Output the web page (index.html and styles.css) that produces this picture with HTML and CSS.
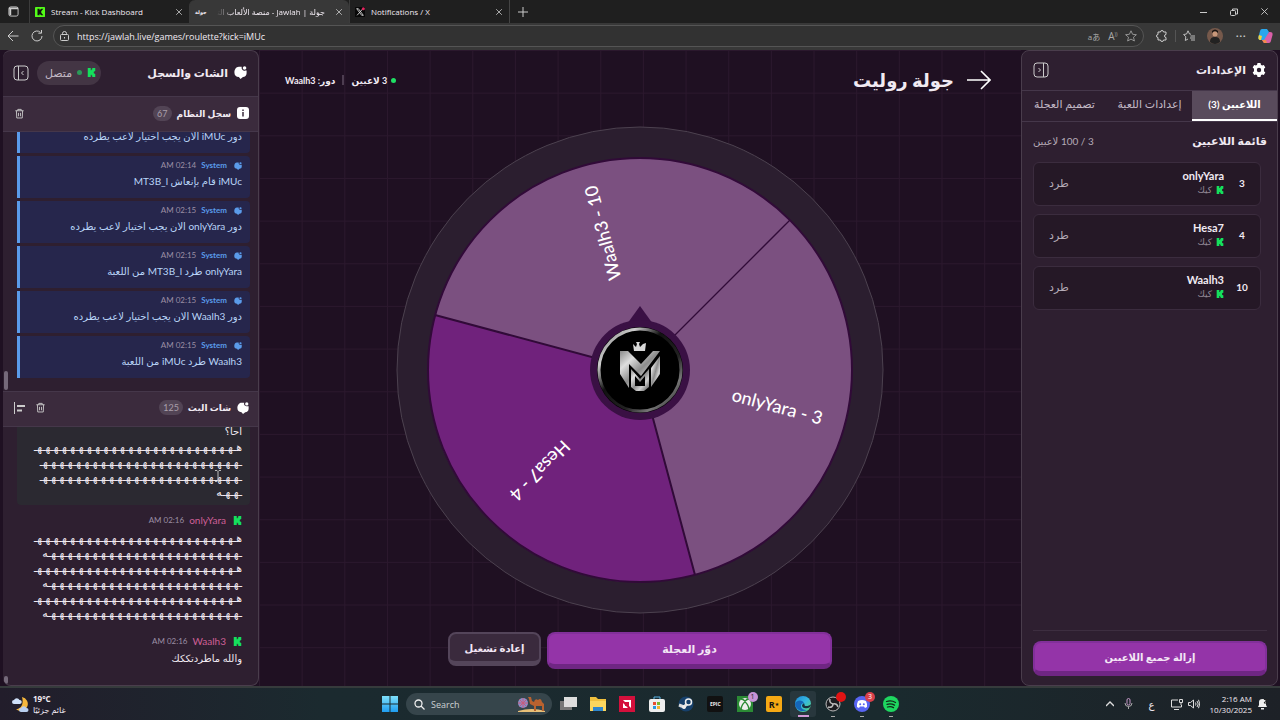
FILE: index.html
```
<!DOCTYPE html>
<html lang="ar">
<head>
  <meta charset="UTF-8">
  <meta name="viewport" content="width=device-width, initial-scale=1.0">
  <title>جولة | Jawlah - منصة الألعاب التفاعلية</title>
  <link rel="stylesheet" href="styles.css">
</head>
<body>

  <!-- Shared icons -->
  <svg class="defs" width="0" height="0" aria-hidden="true">
    <defs>
      <linearGradient id="metal" x1="0" y1="0" x2="1" y2="1">
        <stop offset="0" stop-color="#8a8a8a"/><stop offset=".25" stop-color="#dedede"/><stop offset=".5" stop-color="#8c8c8c"/><stop offset=".7" stop-color="#cfcfcf"/><stop offset="1" stop-color="#4a4a4a"/>
      </linearGradient>
      <linearGradient id="rim" x1="0" y1="0" x2="1" y2="1">
        <stop offset="0" stop-color="#777"/><stop offset=".22" stop-color="#ccc"/><stop offset=".4" stop-color="#111"/><stop offset=".65" stop-color="#222"/><stop offset=".8" stop-color="#777"/><stop offset="1" stop-color="#111"/>
      </linearGradient>
      <linearGradient id="edgeA" x1="0" y1="0" x2="1" y2="1">
        <stop offset="0" stop-color="#1b86d8"/><stop offset=".5" stop-color="#36b9e0"/><stop offset="1" stop-color="#5cd66b"/>
      </linearGradient>
      <linearGradient id="win" x1="0" y1="0" x2="0" y2="1">
        <stop offset="0" stop-color="#7fe0fb"/><stop offset="1" stop-color="#1f9df0"/>
      </linearGradient>
    </defs>
    <symbol id="kick" viewBox="0 0 12 12"><path d="M1 0h4v3h1V2h1V0h4v4h-1v1H9v2h1v1h1v4H7v-2H6V9H5v3H1z"/></symbol>
    <symbol id="chat" viewBox="0 0 16 16"><path d="M6 1h3.500a3.500 3.500 0 0 0 4.500 4.500h1.500V9c0 3-2 4.500-4.500 4.500L8 16l-2-2.500C2.500 13.500.500 11.500.500 8S2.500 1 6 1z"/><circle cx="13" cy="2.500" r="2.200"/></symbol>
    <symbol id="trash" viewBox="0 0 16 16"><path d="M2 4h12M5.500 4V2h5v2M3.500 4l.5 10.500h8L12.500 4M6.500 7v5M9.500 7v5" fill="none" stroke="currentColor" stroke-width="1.300"/></symbol>
    <symbol id="close" viewBox="0 0 10 10"><path d="M1.500 1.500l7 7M8.500 1.500l-7 7" fill="none" stroke="currentColor"/></symbol>
  </svg>

  <!-- Browser -->
  <div class="tabbar">
    <button class="icon-btn" aria-label="Tab actions"><svg viewBox="0 0 12 12" width="11" height="11"><rect x="1" y="1" width="10" height="10" rx="2" fill="none" stroke="#ccc"/><path d="M1 2.500h10M2.500 3v7" stroke="#ccc" stroke-width="2"/></svg></button>
    <div class="tab">
      <svg class="favicon" viewBox="0 0 12 12"><rect width="12" height="12" rx="1" fill="#53fc18"/><path d="M3 2h2.500v2l2-2H10L7.500 5v2L10 10H7.500l-2-2v2H3z" fill="#111"/></svg>
      <span class="tab-title">Stream - Kick Dashboard</span>
      <button class="icon-btn" aria-label="Close tab"><svg width="8" height="8"><use href="#close"/></svg></button>
    </div>
    <div class="tab current">
      <span class="jawlah-icon">جولة</span>
      <span class="tab-title faded" dir="rtl">جولة | Jawlah - منصة الألعاب التفاعلية</span>
      <button class="icon-btn" aria-label="Close tab"><svg width="8" height="8"><use href="#close"/></svg></button>
    </div>
    <div class="tab">
      <svg class="favicon" viewBox="0 0 12 12"><rect width="12" height="12" rx="1" fill="#080808"/><path d="M2 2h2l6 8H8zM9.500 2L2.500 10" fill="none" stroke="#ddd"/><circle cx="10" cy="2" r="1.800" fill="#e0245e"/></svg>
      <span class="tab-title">Notifications / X</span>
      <button class="icon-btn" aria-label="Close tab"><svg width="8" height="8"><use href="#close"/></svg></button>
    </div>
    <button class="icon-btn new-tab" aria-label="New tab"><svg width="10" height="10" viewBox="0 0 10 10"><path d="M5 0v10M0 5h10" stroke="#ccc"/></svg></button>
    <div class="window-controls">
      <button class="icon-btn" aria-label="Minimize"><svg width="8" height="8" viewBox="0 0 8 8"><path d="M0 4.500h7" stroke="#ccc"/></svg></button>
      <button class="icon-btn" aria-label="Restore"><svg width="8" height="8" viewBox="0 0 8 8"><rect x=".5" y="2.500" width="5" height="5" rx="1" fill="none" stroke="#ccc"/><path d="M2.500 2V1h5v5H6" fill="none" stroke="#ccc"/></svg></button>
      <button class="icon-btn" aria-label="Close"><svg width="9" height="9"><use href="#close"/></svg></button>
    </div>
  </div>

  <div class="toolbar">
    <button class="icon-btn" aria-label="Back"><svg width="12" height="12" viewBox="0 0 12 12"><path d="M11.500 6H1M6 1L1 6l5 5" fill="none" stroke="#ccc"/></svg></button>
    <button class="icon-btn" aria-label="Reload"><svg width="12" height="12" viewBox="0 0 12 12"><path d="M11 6a5 5 0 1 1-1.500-3.600M10.500 0v3.200H7.300" fill="none" stroke="#ccc"/></svg></button>
    <div class="address">
      <svg width="9" height="10" viewBox="0 0 9 10"><rect x=".5" y="3.500" width="8" height="6" rx="1" fill="none" stroke="#ccc"/><path d="M2.500 3.500V2.500a2 2 0 0 1 4 0v1M4.500 6v1.500" fill="none" stroke="#ccc"/></svg>
      <input type="text" value="https://jawlah.live/games/roulette?kick=iMUc" aria-label="Address">
      <span class="address-tool">aあ</span>
      <span class="address-tool big">A<sup>))</sup></span>
      <svg width="12" height="12" viewBox="0 0 12 12"><path d="M6 .8l1.600 3.500 3.800.4-2.900 2.500.9 3.800L6 9.100 2.600 11l.9-3.800L.6 4.700l3.800-.4z" fill="none" stroke="#aaa" stroke-width=".8"/></svg>
    </div>
    <button class="icon-btn" aria-label="Extensions"><svg width="12" height="12" viewBox="0 0 12 12"><path d="M2 2h2.500a1.500 1.500 0 0 1 3 0H10v2.500a1.500 1.500 0 0 0 0 3V10H7.500a1.500 1.500 0 0 1-3 0H2V7.500a1.500 1.500 0 0 1 0-3z" fill="none" stroke="#ccc"/></svg></button>
    <span class="divider"></span>
    <button class="icon-btn" aria-label="Favorites"><svg width="12" height="12" viewBox="0 0 12 12"><path d="M8 4.200L6.500 4 5 .8 3.600 4 .6 4.500l2.200 2.300L2.300 10.500 5 9M7.500 6H12M7 8h5M8 10h4" fill="none" stroke="#ccc" stroke-width=".9"/></svg></button>
    <button class="icon-btn" aria-label="Profile"><svg width="16" height="16" viewBox="0 0 16 16"><circle cx="8" cy="8" r="8" fill="#76594b"/><path d="M3 14c0-4 2-5 5-5s5 1 5 5a8 8 0 0 1-10 0z" fill="#222"/><circle cx="8" cy="6" r="2.500" fill="#c9987a"/><path d="M5 5q3-4 6 0V3Q8 0 5 3z" fill="#1a1512"/></svg></button>
    <button class="icon-btn" aria-label="More">···</button>
    <button class="icon-btn" aria-label="Copilot"><svg width="15" height="14" viewBox="0 0 15 14"><path d="M4 0h5l2 3-3 8H3C0 11 0 9 1 6s1-6 3-6z" fill="#2aa6ec"/><path d="M1 6l3 1-1 4C0 11 0 9 1 6z" fill="#f0cf3c"/><path d="M11 3h1c3 0 3 2 2 5s-1 6-3 6H6l-2-3h2z" fill="#d95fa8"/><path d="M4 11h4l1 3H6z" fill="#f28a4e"/></svg></button>
  </div>

  <!-- Game page -->
  <main class="app" dir="rtl">

    <aside class="panel settings">
      <div class="settings-header">
        <h2><svg width="14" height="14" viewBox="0 0 16 16"><path fill="#fff" fill-rule="evenodd" d="M6.300 0h3.400l.5 2 1.300.8 2-.6 1.700 2.900L13.700 6.500v3l1.500 1.400-1.700 2.900-2-.6-1.300.8-.5 2H6.300l-.5-2-1.300-.8-2 .6L.8 10.900 2.300 9.500v-3L.8 5.100l1.700-2.900 2 .6L5.800 2zM8 5.500a2.500 2.500 0 1 0 0 5 2.500 2.500 0 0 0 0-5z"/></svg>الإعدادات</h2>
        <button class="icon-btn" aria-label="إغلاق الإعدادات"><svg width="16" height="16" viewBox="0 0 16 16"><rect x="1" y="1" width="14" height="14" rx="3" fill="none" stroke="#ccc"/><path d="M10.500 1v14M5.500 6l2 2-2 2" fill="none" stroke="#ccc"/></svg></button>
      </div>
      <nav class="settings-tabs">
        <button class="active">اللاعبين (3)</button>
        <button>إعدادات اللعبة</button>
        <button>تصميم العجلة</button>
      </nav>
      <section class="players">
        <div class="players-title">
          <h3>قائمة اللاعبين</h3>
          <span>3 / 100 لاعبين</span>
        </div>
        <ul>
          <li>
            <b class="number">3</b>
            <div class="player"><strong>onlyYara</strong><small><svg class="kick" width="8" height="8"><use href="#kick"/></svg>كيك</small></div>
            <button class="kick-out">طرد</button>
          </li>
          <li>
            <b class="number">4</b>
            <div class="player"><strong>Hesa7</strong><small><svg class="kick" width="8" height="8"><use href="#kick"/></svg>كيك</small></div>
            <button class="kick-out">طرد</button>
          </li>
          <li>
            <b class="number">10</b>
            <div class="player"><strong>Waalh3</strong><small><svg class="kick" width="8" height="8"><use href="#kick"/></svg>كيك</small></div>
            <button class="kick-out">طرد</button>
          </li>
        </ul>
      </section>
      <div class="settings-footer">
        <button class="btn primary">إزالة جميع اللاعبين</button>
      </div>
    </aside>

    <section class="game">
      <div class="game-header">
        <h1><svg width="24" height="20" viewBox="0 0 24 20"><path d="M0 10h23M14 1l9 9-9 9" fill="none" stroke="#fff" stroke-width="1.600"/></svg>جولة روليت</h1>
        <p class="status"><i class="dot"></i><span>3 لاعبين</span><i class="bar"></i><span>دور: Waalh3</span></p>
      </div>

      <svg class="wheel" viewBox="-246 -246 492 492" direction="ltr">
        <circle r="243" fill="#2b1e2f" stroke="#4c414f"/>
        <circle r="212" fill="#7b5080"/>
        <path d="M0 0L-205-55A212 212 0 0 0 55 205z" fill="#70227c"/>
        <path d="M0 0L-205-55M0 0L55 205" stroke="#310a38" stroke-width="2"/>
        <path d="M0 0L150-150" stroke="#310a38" stroke-width="1.300"/>
        <circle r="212" fill="none" stroke="#310a38" stroke-width="2"/>
        <g class="slice-label">
          <text transform="rotate(15) translate(142 6)">onlyYara - 3</text>
          <text transform="rotate(135) translate(142 6)">Hesa7 - 4</text>
          <text transform="rotate(255) translate(142 6)">Waalh3 - 10</text>
        </g>
        <path d="M0-64L13-46H-13z" fill="#3a1044"/>
        <circle r="50" fill="#3a1044"/>
        <circle r="43" fill="#000"/>
        <circle r="41" fill="none" stroke="url(#rim)" stroke-width="3"/>
        <path d="M-6-19l-1-7 3 3 1-3-1-2h4l-1 2 1 3 3-3 3-1-1 8z" fill="#d8d8d8"/>
        <path d="M-20-19h8L1-6 13-19h7L1 6-11-6v24L-20 4z" fill="url(#metal)"/>
        <path d="M20-14v18l-9 13V-2z" fill="url(#metal)"/>
        <path d="M-9-1L0 9 9-1v18l-5 4h-8l-5-4z" fill="url(#metal)"/>
        <path d="M-5 6v10H5V6L0 12z" fill="#000"/>
      </svg>

      <div class="controls">
        <button class="btn primary spin">دوّر العجلة</button>
        <button class="btn secondary">إعادة تشغيل</button>
      </div>
    </section>

    <aside class="panel chat">
      <div class="chat-header">
        <h2><svg width="13" height="13" fill="#fff"><use href="#chat"/></svg>الشات والسجل</h2>
        <div class="header-tools">
          <span class="online"><svg class="kick" width="9" height="9"><use href="#kick"/></svg><i class="dot"></i>متصل</span>
          <button class="icon-btn" aria-label="إغلاق الشات"><svg width="16" height="16" viewBox="0 0 16 16"><rect x="1" y="1" width="14" height="14" rx="3" fill="none" stroke="#ccc"/><path d="M5.500 1v14M10.500 6l-2 2 2 2" fill="none" stroke="#ccc"/></svg></button>
        </div>
      </div>

      <div class="section-bar">
        <h3><svg width="12" height="12" viewBox="0 0 12 12"><rect width="12" height="12" rx="3" fill="#fff"/><path d="M6 5v4.500M6 2.500V4" stroke="#3b2b3d" stroke-width="1.500"/></svg>سجل النظام</h3>
        <span class="count">67</span>
        <div class="bar-tools"><button class="icon-btn" aria-label="مسح السجل"><svg width="11" height="11"><use href="#trash"/></svg></button></div>
      </div>
      <div class="messages log">
        <article class="system">
          <header><svg width="8" height="8"><use href="#chat"/></svg><b>System</b><time>02:14 AM</time></header>
          <p>دور iMUc الان يجب اختيار لاعب يطرده</p>
        </article>
        <article class="system">
          <header><svg width="8" height="8"><use href="#chat"/></svg><b>System</b><time>02:14 AM</time></header>
          <p>iMUc قام بإنعاش MT3B_l</p>
        </article>
        <article class="system">
          <header><svg width="8" height="8"><use href="#chat"/></svg><b>System</b><time>02:15 AM</time></header>
          <p>دور onlyYara الان يجب اختيار لاعب يطرده</p>
        </article>
        <article class="system">
          <header><svg width="8" height="8"><use href="#chat"/></svg><b>System</b><time>02:15 AM</time></header>
          <p>onlyYara طرد MT3B_l من اللعبة</p>
        </article>
        <article class="system">
          <header><svg width="8" height="8"><use href="#chat"/></svg><b>System</b><time>02:15 AM</time></header>
          <p>دور Waalh3 الان يجب اختيار لاعب يطرده</p>
        </article>
        <article class="system">
          <header><svg width="8" height="8"><use href="#chat"/></svg><b>System</b><time>02:15 AM</time></header>
          <p>Waalh3 طرد iMUc من اللعبة</p>
        </article>
      </div>

      <div class="section-bar">
        <h3><svg width="12" height="12" fill="#fff"><use href="#chat"/></svg>شات البث</h3>
        <span class="count">125</span>
        <div class="bar-tools">
          <button class="icon-btn" aria-label="مسح الشات"><svg width="11" height="11"><use href="#trash"/></svg></button>
          <button class="icon-btn" aria-label="محاذاة"><svg width="11" height="12" viewBox="0 0 11 12"><path d="M.5 0v12" stroke="#ccc"/><path d="M3 4h8M3 8.500h5" stroke="#ccc" stroke-width="2"/></svg></button>
        </div>
      </div>
      <div class="messages stream">
        <article class="hovered">
          <p>احا؟</p>
          <p class="laugh">هـهـهـهـهـهـهـهـهـهـهـهـهـهـهـهـهـهـهـهـهـهـهـهـهـ<br>ـهـهـهـهـهـهـهـهـهـهـهـهـهـهـهـهـهـهـهـهـهـهـهـهـ<br>ـهـهـهـهـهـهـهـهـهـهـهـهـهـهـهـهـهـهـهـهـهـهـهـهـ<br>ـهـهـه</p>
          <svg class="cursor" width="6" height="12" viewBox="0 0 6 12"><path d="M0 .5h2l1 1 1-1h2M3 1.500v9M0 11.500h2l1-1 1 1h2" fill="none" stroke="#bbb"/></svg>
        </article>
        <article>
          <header><svg class="kick" width="9" height="9"><use href="#kick"/></svg><b>onlyYara</b><time>02:16 AM</time></header>
          <p class="laugh">هـهـهـهـهـهـهـهـهـهـهـهـهـهـهـهـهـهـهـهـهـهـهـهـهـ<br>ـهـهـهـهـهـهـهـهـهـهـهـهـهـهـهـهـهـهـهـهـهـهـهـه<br>هـهـهـهـهـهـهـهـهـهـهـهـهـهـهـهـهـهـهـهـهـهـهـهـهـ<br>ـهـهـهـهـهـهـهـهـهـهـهـهـهـهـهـهـهـهـهـهـهـهـهـه<br>هـهـهـهـهـهـهـهـهـهـهـهـهـهـهـهـهـهـهـهـهـهـهـهـهـ<br>ـهـهـهـهـهـهـهـهـهـهـهـهـهـهـهـهـهـهـهـهـهـهـهـه</p>
        </article>
        <article>
          <header><svg class="kick" width="9" height="9"><use href="#kick"/></svg><b>Waalh3</b><time>02:16 AM</time></header>
          <p>والله ماطردتككك</p>
        </article>
      </div>
    </aside>
  </main>

  <!-- Windows taskbar -->
  <footer class="taskbar">
    <div class="weather">
      <svg width="17" height="17" viewBox="0 0 17 17"><path d="M10 1a7 7 0 1 1-6 12c5 0 8-5 6-12z" fill="#f6b73c"/><path d="M2 8a2 2 0 0 1 0-4 3 3 0 0 1 5.500 0A2 2 0 0 1 8 8z" fill="#cfe0f8"/><path d="M9 16a2 2 0 0 1 0-4 3 3 0 0 1 5.500 0 2 2 0 0 1 0 4z" fill="#b9cff0"/></svg>
      <p><b>19°C</b><br>غائم جزئيًا</p>
    </div>
    <div class="task-center">
      <button class="icon-btn" aria-label="Start"><svg width="16" height="16" viewBox="0 0 16 16" fill="url(#win)"><path d="M0 0h7.500v7.500H0zM8.500 0H16v7.500H8.500zM0 8.500h7.500V16H0zM8.500 8.500H16V16H8.500z"/></svg></button>
      <label class="search">
        <svg width="11" height="11" viewBox="0 0 11 11"><circle cx="4.500" cy="4.500" r="3.500" fill="none" stroke="#eee" stroke-width="1.300"/><path d="M7 7l3.500 3.500" stroke="#eee" stroke-width="1.300"/></svg>
        <input type="text" placeholder="Search" aria-label="Search">
        <svg width="28" height="18" viewBox="0 0 28 18"><circle cx="5" cy="8" r="5" fill="#8d8fc9"/><path d="M0 8h10M5 3v10M1.500 4.500l7 7M8.500 4.500l-7 7" stroke="#c95a7a"/><path d="M0 16q14-4 27 0v1H0z" fill="#e8c078"/><path d="M10 2h3l1 4 2 1q1-4 4-2 3-3 4 2l2 2v7h-2v-5h-6v5h-2v-5l-4-2-1-5z" fill="#b9622f"/></svg>
      </label>
      <div class="apps">
        <button class="icon-btn" aria-label="Task view"><svg width="18" height="16" viewBox="0 0 18 16"><path d="M0 5h12v9H0z" fill="#777"/><path d="M4 1h13v10H4z" fill="#ddd"/></svg></button>
        <button class="icon-btn" aria-label="Explorer"><svg width="18" height="16" viewBox="0 0 18 16"><path d="M1 1h6l2 2h8v12H1z" fill="#f0c03e"/><path d="M1 5h16v10H1z" fill="#fbd65e"/><path d="M4 11h10v4H4z" fill="#2f86cc"/></svg></button>
        <button class="icon-btn" aria-label="AMD"><svg width="16" height="16" viewBox="0 0 16 16"><path d="M0 0h16v16H0z" fill="#d4103c"/><path d="M4 4h8v8l-2-2V6H6zM4 7v5h5L7 10H6V9z" fill="#fff"/></svg></button>
        <button class="icon-btn" aria-label="Store"><svg width="16" height="16" viewBox="0 0 16 16"><path d="M5 4V1h6v3" fill="none" stroke="#58b3e6"/><rect y="3" width="16" height="13" rx="2" fill="#eee"/><path d="M4 6h3v3H4z" fill="#e84c30"/><path d="M8 6h3v3H8z" fill="#79b82e"/><path d="M4 10h3v3H4z" fill="#2997e0"/><path d="M8 10h3v3H8z" fill="#f3b52d"/></svg></button>
        <button class="icon-btn" aria-label="Steam"><svg width="16" height="16" viewBox="0 0 16 16"><circle cx="8" cy="8" r="7.500" fill="#17406b"/><path d="M1 9l5 2 3-3" stroke="#ddd" stroke-width="3" fill="none"/><circle cx="10.500" cy="6" r="3" fill="#17406b" stroke="#eee" stroke-width="1.500"/><circle cx="6" cy="11" r="2" fill="#eee"/></svg></button>
        <button class="icon-btn epic" aria-label="Epic Games">EPIC</button>
        <button class="icon-btn" aria-label="Xbox"><svg width="16" height="16" viewBox="0 0 16 16"><path d="M0 0h16v16H0z" fill="#2b8a35"/><circle cx="8" cy="8" r="6" fill="#eee"/><path d="M4 13Q5 8 8 6q3 2 4 7M4 3q2 0 4 2 2-2 4-2" fill="none" stroke="#2b8a35" stroke-width="1.500"/></svg><span class="badge lilac">1</span></button>
        <button class="icon-btn rockstar" aria-label="Rockstar">R<sub>★</sub></button>
        <button class="icon-btn open edge" aria-label="Edge"><svg width="16" height="16" viewBox="0 0 16 16"><circle cx="8" cy="8" r="8" fill="url(#edgeA)"/><path d="M0 8c1-4 7-5 9-1 0 0-3 0-3 3s3 4 6 4a8 8 0 0 1-12-6z" fill="#1566b8"/><path d="M9 7c1 2 0 3 2 3s4-.5 5-2q0 3-3 4-6 1-6-3z" fill="#17303f"/></svg></button>
        <button class="icon-btn open" aria-label="OBS"><svg width="16" height="16" viewBox="0 0 16 16"><circle cx="8" cy="8" r="7" fill="#1c1c20" stroke="#bbb"/><path d="M8 8q-4-1-3-5M8 8q4-1 5 3M8 8q0 4-5 3" fill="none" stroke="#bbb" stroke-width="1.500"/></svg><span class="badge red"></span></button>
        <button class="icon-btn open" aria-label="Discord"><svg width="16" height="16" viewBox="0 0 16 16"><circle cx="8" cy="8" r="8" fill="#5865f2"/><path d="M4 5q4-2 8 0 1.500 3 1 6l-2 1-1-1.500H6L5 12l-2-1q-.500-3 1-6z" fill="#fff"/><circle cx="6.200" cy="8.200" r="1" fill="#5865f2"/><circle cx="9.800" cy="8.200" r="1" fill="#5865f2"/></svg><span class="badge coral">3</span></button>
        <button class="icon-btn open" aria-label="Spotify"><svg width="16" height="16" viewBox="0 0 16 16"><circle cx="8" cy="8" r="8" fill="#1ed760"/><path d="M3.500 5.500q5-1.500 9 1M4 8.300q4-1.200 7.500.8M4.500 11q3.500-1 6 .6" fill="none" stroke="#102a18" stroke-width="1.300" stroke-linecap="round"/></svg></button>
      </div>
    </div>
    <div class="tray">
      <svg width="8" height="6" viewBox="0 0 8 6"><path d="M0 5l4-4 4 4" fill="none" stroke="#ddd" stroke-width="1.300"/></svg>
      <svg width="9" height="12" viewBox="0 0 9 12"><rect x="3" y=".5" width="3" height="6.500" rx="1.500" fill="none" stroke="#c69ac9"/><path d="M1 5a3.500 3.500 0 0 0 7 0M4.500 8.500V11" fill="none" stroke="#aaa"/></svg>
      <span class="lang">ع</span>
      <span class="net"><svg width="12" height="11" viewBox="0 0 12 11"><path d="M7 1H.5v7h10V6M3 10.500h5M8.500.5h3v3h-3zM10 4v2" fill="none" stroke="#ddd"/></svg><svg width="12" height="10" viewBox="0 0 12 10"><path d="M.5 3.500h2L5.500 1v8L2.500 6.500h-2zM7.500 3.500q1 1.500 0 3M9 2q2.500 3 0 6M10.500.8q2.500 4 0 8.400" fill="none" stroke="#ddd"/></svg></span>
      <p class="clock">2:16 AM<br>10/30/2025</p>
      <svg width="11" height="12" viewBox="0 0 11 12"><path d="M1 9l1-2V4q0-3 3.500-3T9 4v3l1 2zM4 10h3v1.500H4z" fill="#eee"/><path d="M7 1.500h3L7 5h3" fill="none" stroke="#222"/></svg>
    </div>
  </footer>

</body>
</html>
```
FILE: styles.css
```
* {
  box-sizing: border-box;
}
body {
  margin: 0;
  height: 100vh;
  display: flex;
  flex-direction: column;
  overflow: hidden;
  background-color: #363636;
  color: #f1eaf2;
  font-family: Lato, "DejaVu Sans", sans-serif;
  font-size: 10px;
}
h1, h2, h3, p, ul {
  margin: 0;
  padding: 0;
}
button, input {
  font-family: inherit;
  color: inherit;
  border: none;
  background: none;
  padding: 0;
  margin: 0;
}
svg {
  flex: none;
}
.defs {
  position: absolute;
}
.icon-btn {
  display: flex;
  align-items: center;
  justify-content: center;
  color: #ccc;
}

/* browser */
.tabbar, .toolbar, .taskbar {
  font-family: "Open Sans", "DejaVu Sans", "Noto Sans CJK JP", sans-serif;
}
.tabbar {
  flex: none;
  height: 23px;
  display: flex;
  align-items: stretch;
  padding-left: 8px;
  background-color: #1f1f1f;
}
.tab {
  width: 160px;
  display: flex;
  align-items: center;
  gap: 6px;
  padding: 0 6px 0 5px;
  border-left: 1px solid #3c3c3c;
  font-size: 8px;
}
.tabbar > .icon-btn:first-child {
  margin-right: 10px;
}
.tab.current {
  gap: 10px;
  background-color: #383838;
  border-color: #383838;
  border-radius: 6px 6px 0 0;
}
.favicon {
  width: 10px;
  height: 10px;
}
.tab-title {
  flex: 1;
  overflow: hidden;
  white-space: nowrap;
}
.tab-title.faded {
  mask-image: linear-gradient(to left, #000 85%, transparent);
}
.jawlah-icon {
  font-size: 5px;
  font-weight: bold;
}
.new-tab {
  padding-left: 8px;
  border-left: 1px solid #444;
}
.window-controls {
  margin-left: auto;
  display: flex;
  gap: 22px;
  padding-right: 11px;
}
.toolbar {
  flex: none;
  height: 27px;
  display: flex;
  align-items: center;
  gap: 12px;
  padding: 1px 7px 2px;
  background-color: #383838;
}
.address {
  flex: 1;
  height: 22px;
  display: flex;
  align-items: center;
  gap: 8px;
  padding: 0 6px;
  margin-left: -2px;
  border: 1px solid #555;
  border-radius: 11px;
  background-color: #323232;
}
.address input {
  flex: 1;
  min-width: 0;
  font-size: 9px;
}
.address-tool {
  font-size: 8px;
  color: #aaa;
}
.address-tool.big {
  font-size: 10px;
}
.address-tool sup {
  font-size: 5px;
}
.divider {
  width: 1px;
  height: 12px;
  margin: 0 -5px;
  background-color: #555;
}

/* page */
.app {
  flex: 1;
  min-height: 0;
  display: flex;
  padding: 0 2px 0 3px;
  background-color: #1f1022;
}
.panel {
  display: flex;
  flex-direction: column;
  border: 1px solid #4a3d4c;
  border-radius: 8px;
  background-color: #2e1f30;
  overflow: hidden;
}
.settings {
  width: 257px;
}
.chat {
  width: 256px;
  border-left: none;
}
h2, h3 {
  display: flex;
  align-items: center;
  gap: 6px;
}
h2, h3 {
  font-size: 11px;
}
.settings-header {
  height: 40px;
  display: flex;
  align-items: center;
  justify-content: space-between;
  padding: 0 10px 2px 11px;
  border-bottom: 1px solid #45374a;
}
.settings-header h2 {
  padding-right: 1px;
}
.settings-tabs {
  height: 31px;
  display: flex;
  border-bottom: 1px solid #45374a;
}
.settings-tabs button {
  flex: 1;
  padding-bottom: 4px;
  font-size: 11px;
  white-space: nowrap;
  color: #c3b9c5;
}
.settings-tabs .active {
  padding-bottom: 2px;
  background-color: #594b5c;
  border-bottom: 2px solid #fff;
  color: #fff;
  font-size: 10px;
  font-weight: bold;
}
.players {
  flex: 1;
  padding: 9px 10px 0 11px;
}
.players-title {
  height: 20px;
  display: flex;
  align-items: center;
  justify-content: space-between;
  margin-bottom: 11px;
}
.players-title span {
  color: #b5abb7;
}
.players ul {
  list-style: none;
  padding-right: 6px;
  display: flex;
  flex-direction: column;
  gap: 8px;
}
.players li {
  height: 44px;
  display: flex;
  align-items: center;
  gap: 4px;
  padding: 0 4px 2px 15px;
  border: 1px solid #3b2c3e;
  border-radius: 6px;
  background-color: #251826;
}
.number {
  width: 28px;
  text-align: center;
}
.player {
  flex: 1;
  display: flex;
  flex-direction: column;
  font-size: 11px;
  line-height: 14px;
}
.player small {
  display: flex;
  align-items: center;
  gap: 4px;
  font-size: 9px;
  color: #948a96;
}
.kick {
  fill: #15e05c;
}
.kick-out {
  font-size: 11px;
  color: #b5abb7;
}
.settings-footer {
  margin: 0 10px 0 11px;
  padding: 10px 0 9px;
  border-top: 1px solid #3d2e40;
}
.btn {
  display: block;
  border-radius: 8px;
  font-size: 10px;
  font-weight: bold;
  color: #f3e6f5;
}
.btn.primary {
  width: 100%;
  height: 35px;
  border: 2px solid #82309a;
  border-bottom: 5px solid #6f2683;
  background-color: #9434a8;
}
.btn.secondary {
  width: 93px;
  height: 34px;
  border: 2px solid #54455a;
  border-bottom: 5px solid #54455a;
  background-color: #3a2a3d;
}

/* wheel */
.game {
  flex: 1;
  min-width: 0;
  display: flex;
  flex-direction: column;
  background-image: linear-gradient(#2b182d 1px, transparent 1px), linear-gradient(90deg, #2b182d 1px, transparent 1px);
  background-size: calc(100vw / 30) calc(100vw / 30);
}
.game-header {
  flex: none;
  height: 74px;
  display: flex;
  align-items: center;
  justify-content: space-between;
  padding: 0 30px 14px 26px;
}
h1 {
  display: flex;
  align-items: center;
  gap: 13px;
  font-size: 18px;
}
.status {
  display: flex;
  align-items: center;
  gap: 4px;
  font-size: 9px;
  font-weight: bold;
}
.dot {
  width: 5px;
  height: 5px;
  border-radius: 50%;
  background-color: #1fdf64;
}
.bar {
  width: 2px;
  height: 10px;
  margin: 0 3px;
  background-color: #4d3d50;
}
.wheel {
  flex: 1;
  min-height: 0;
  width: 100%;
}
.slice-label {
  font-size: 18px;
  font-weight: 500;
  fill: #fff;
  text-anchor: middle;
}
.controls {
  flex: none;
  height: 70px;
  display: flex;
  justify-content: center;
  align-items: flex-start;
  gap: 6px;
  padding-top: 16px;
}
.controls .spin {
  width: 285px;
  height: 37px;
  font-size: 11px;
}

/* chat */
.chat-header {
  flex: none;
  height: 45px;
  display: flex;
  align-items: center;
  justify-content: space-between;
  padding: 0 11px 2px 10px;
}
.header-tools {
  display: flex;
  align-items: center;
  gap: 8px;
}
.online {
  height: 24px;
  display: flex;
  align-items: center;
  gap: 5px;
  padding: 0 5px 0 8px;
  border-radius: 12px;
  background-color: #433544;
  color: #c3b9c5;
  font-size: 11px;
}
.online .dot {
  background-color: #2a9a58;
}
.section-bar {
  flex: none;
  height: 36px;
  display: flex;
  align-items: center;
  gap: 5px;
  padding: 0 9px 2px;
  border-top: 1px solid #45374a;
  border-bottom: 1px solid #45374a;
  background-color: #3b2b3d;
}
.section-bar h3 {
  font-size: 9px;
}
.count {
  padding: 0 4px;
  border-radius: 8px;
  background-color: #524455;
  color: #a99fab;
  font-size: 9px;
  line-height: 15px;
}
.bar-tools {
  margin-right: auto;
  padding-left: 2px;
  display: flex;
  gap: 10px;
}
.messages {
  position: relative;
  flex: 1;
  min-height: 0;
  display: flex;
  flex-direction: column;
  justify-content: flex-end;
  gap: 3px;
  padding: 0 8px 13px 14px;
  overflow: hidden;
}
/* scroll thumb */
.messages::after {
  content: "";
  position: absolute;
  left: 1px;
  bottom: 1px;
  width: 4px;
  height: 8px;
  border-radius: 2px;
  background-color: #75697a;
}
.messages.log::after {
  height: 19px;
}
.messages article {
  position: relative;
  flex: none;
  padding: 4px 8px 6px;
  line-height: 15px;
}
.messages header {
  height: 16px;
  display: flex;
  align-items: center;
  gap: 4px;
  margin-bottom: 2px;
  font-size: 8px;
  color: #9c8fa5;
}
.messages header b {
  margin: 0 3px 0 1px;
  font-size: 10px;
  font-weight: normal;
  color: #cf5f97;
}
.messages article.system {
  height: 42px;
  padding: 2px 8px;
  border-left: 3px solid #5a9bea;
  border-radius: 0 4px 4px 0;
  background-color: #26264c;
  color: #b9d5f8;
}
.system header {
  margin-bottom: 0;
}
.system header svg {
  fill: #5a9bea;
}
.messages .system header b {
  font-size: 8px;
  font-weight: bold;
  color: #5a9bea;
}
.hovered {
  border-radius: 4px;
  background-color: #2b2931;
}
.laugh {
  font-size: 11px;
  white-space: nowrap;
}
.cursor {
  position: absolute;
  right: 29px;
  bottom: 23px;
}

/* taskbar */
.taskbar {
  flex: none;
  height: 34px;
  display: grid;
  grid-template-columns: 1fr auto 1fr;
  align-items: center;
  padding: 0 12px;
  border-top: 2px solid #363b3c;
  background-image: linear-gradient(90deg, #221d2b, #1b2a2f 25%, #1a2a2e 70%, #1d2127);
}
.weather {
  display: flex;
  align-items: center;
  gap: 4px;
  font-size: 8px;
  line-height: 11px;
}
.task-center {
  display: flex;
  align-items: center;
  gap: 8px;
  padding-left: 8px;
}
.search {
  width: 146px;
  height: 22px;
  display: flex;
  align-items: center;
  gap: 6px;
  padding: 0 6px 0 8px;
  border-radius: 11px;
  background-color: #36454b;
}
.search input {
  flex: 1;
  min-width: 0;
  font-size: 9px;
}
.search input::placeholder {
  color: #ccd2d4;
}
.apps {
  width: 352px;
  margin-left: -6px;
  display: flex;
  justify-content: space-around;
}
.apps .icon-btn {
  position: relative;
  width: 26px;
  height: 26px;
}
.apps .open::after {
  content: "";
  position: absolute;
  bottom: 0;
  width: 4px;
  height: 1px;
  background-color: #aaa;
}
.apps .edge {
  border-radius: 3px;
  background-color: #28373d;
}
.apps .edge::after {
  width: 11px;
  height: 2px;
  background-color: #d39ad8;
}
.apps .epic, .apps .rockstar {
  width: 16px;
  height: 16px;
  margin: 5px;
  border-radius: 2px;
  background-color: #111;
  color: #eee;
  font-size: 5px;
  font-weight: bold;
}
.apps .rockstar {
  background-color: #f5a914;
  color: #111;
  font-size: 9px;
}
.rockstar sub {
  font-size: 5px;
}
.badge {
  position: absolute;
  top: 1px;
  right: 0;
  width: 10px;
  height: 10px;
  border-radius: 50%;
  font-size: 7px;
  line-height: 10px;
}
.badge.lilac {
  background-color: #c793d6;
  color: #222;
}
.badge.red {
  background-color: #e01414;
}
.badge.coral {
  background-color: #d8404a;
  color: #fff;
}
.tray {
  display: flex;
  align-items: center;
  justify-content: flex-end;
  gap: 10px;
}
.lang {
  padding: 0 6px;
}
.net {
  display: flex;
  gap: 5px;
}
.clock {
  font-size: 8px;
  line-height: 11px;
  text-align: right;
}
.clock + svg {
  margin-left: -5px;
}
```
